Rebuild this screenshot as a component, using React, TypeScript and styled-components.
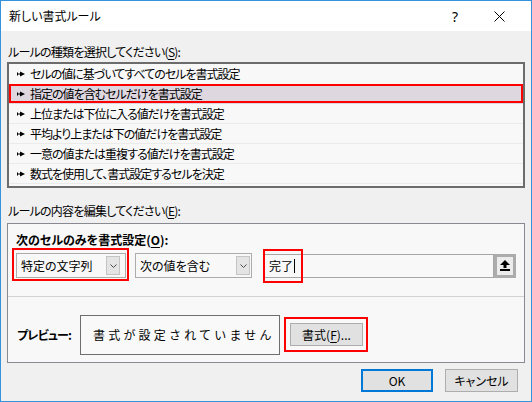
import React from "react";
import styled, { createGlobalStyle } from "styled-components";

const Global = createGlobalStyle`
  html, body { margin: 0; padding: 0; background: #f0f0f0; }
  body { font-family: "Noto Sans CJK JP", "Noto Sans", sans-serif; }
`;

const Window = styled.div`
  width: 532px;
  height: 402px;
  box-sizing: border-box;
  border: 1px solid #3592dd;
  background: #f0f0f0;
  display: flex;
  flex-direction: column;
  font-family: "Noto Sans CJK JP", "Noto Sans", sans-serif;
  font-size: 12px;
  color: #000;
  font-feature-settings: "palt";
`;

const TitleBar = styled.div`
  height: 30px;
  background: #ffffff;
  display: flex;
  align-items: center;
  padding-left: 8px;
`;

const Title = styled.div`
  flex: 1;
  font-size: 12px;
  line-height: 16px;
`;

const TitleButton = styled.div`
  width: 44px;
  height: 30px;
  display: flex;
  align-items: center;
  justify-content: center;
  font-family: "Noto Sans", sans-serif;
  font-size: 14px;
`;

const CloseButton = styled(TitleButton)`
  margin-right: 10px;
`;

const Body = styled.div`
  flex: 1;
  display: flex;
  flex-direction: column;
  padding: 0 6px;
`;

const Label = styled.div<{ $top: number }>`
  margin-top: ${(p) => p.$top}px;
  padding-left: 1px;
  line-height: 16px;
  height: 16px;
  letter-spacing: -0.75px;
`;

const Key = styled.span`
  text-decoration: underline;
  text-underline-offset: 2px;
`;

const RuleList = styled.div`
  margin-top: 2px;
  height: 126px;
  box-sizing: border-box;
  border: 2px solid #6c6c6c;
  background: #f8f8f8;
  display: flex;
  flex-direction: column;
`;

const RuleRow = styled.div<{ $selected?: boolean; $line?: boolean }>`
  height: 20px;
  box-sizing: border-box;
  display: flex;
  align-items: center;
  gap: 5px;
  padding-left: 8px;
  border-bottom: 1px solid ${(p) => (p.$line ? "#ebebeb" : "transparent")};
  background: ${(p) => (p.$selected ? "#dfd7e0" : "transparent")};
  box-shadow: ${(p) => (p.$selected ? "inset 0 0 0 2px #ff0000" : "none")};
  line-height: 16px;
  letter-spacing: -1px;
`;

const Bullet = () => (
  <svg width="8" height="6" viewBox="0 0 8 6">
    <rect x="0" y="2.5" width="4" height="1" fill="#000" />
    <rect x="0" y="1.5" width="1" height="3" fill="#000" />
    <polygon points="3,0.5 8,3 3,5.5" fill="#000" />
  </svg>
);

const Group = styled.div`
  margin-top: 4px;
  height: 140px;
  box-sizing: border-box;
  border: 1px solid #898991;
  background: #f8f8f8;
  display: flex;
  flex-direction: column;
`;

const UpperSection = styled.div`
  height: 73px;
  box-sizing: border-box;
  padding: 8px 0 0 8px;
  border-bottom: 1px solid #d2d2d2;
`;

const BoldLabel = styled.div`
  font-weight: 700;
  line-height: 16px;
  height: 16px;
`;

const ControlRow = styled.div`
  margin-top: 5px;
  display: flex;
  align-items: center;
`;

const Anchor = styled.div<{ $gap?: number; $lead?: number }>`
  position: relative;
  margin-left: ${(p) => p.$lead ?? 0}px;
  margin-right: ${(p) => p.$gap ?? 0}px;
  display: flex;
`;

/* red annotation frame drawn over a control */
const Highlight = styled.div<{ $l: number; $t: number; $r: number; $b: number }>`
  position: absolute;
  left: ${(p) => p.$l}px;
  top: ${(p) => p.$t}px;
  right: ${(p) => p.$r}px;
  bottom: ${(p) => p.$b}px;
  border: 2px solid #ff0000;
  pointer-events: none;
`;

const Combo = styled.div<{ $w: number; $inset: number }>`
  width: ${(p) => p.$w}px;
  height: 25px;
  box-sizing: border-box;
  border: 1px solid #acacac;
  background: #f8f8f8;
  display: flex;
  align-items: center;
  padding: 0 ${(p) => p.$inset}px 0 4px;
`;

const ComboText = styled.div`
  flex: 1;
  line-height: 16px;
`;

const DropButton = styled.div`
  width: 14px;
  height: 19px;
  box-sizing: border-box;
  border: 1px solid #c4c4c4;
  background: #e4e4e4;
  display: flex;
  align-items: center;
  justify-content: center;
`;

const Chevron = () => (
  <svg width="7" height="4" viewBox="0 0 7 4">
    <polyline points="0.5,0.5 3.5,3.5 6.5,0.5" fill="none" stroke="#4a4a4a" strokeWidth="1" />
  </svg>
);

const TextInput = styled.div`
  width: 230px;
  height: 24px;
  box-sizing: border-box;
  border: 1px solid #a6a6a6;
  background: #f8f8f8;
  display: flex;
  align-items: center;
  padding-left: 4px;
  line-height: 16px;
`;

const Caret = styled.span`
  display: inline-block;
  width: 1px;
  height: 14px;
  background: #000;
  margin-left: 1px;
`;

const PickButton = styled.div`
  width: 22px;
  height: 24px;
  box-sizing: border-box;
  border: 3px solid #acacac;
  background: #ececec;
  display: flex;
  align-items: center;
  justify-content: center;
`;

const UpArrow = () => (
  <svg width="10" height="11" viewBox="0 0 10 11">
    <polygon points="5,0 10,5 6.5,5 6.5,8 3.5,8 3.5,5 0,5" fill="#000" />
    <rect x="0" y="9" width="10" height="2" fill="#000" />
  </svg>
);

const LowerSection = styled.div`
  flex: 1;
  display: flex;
  align-items: center;
  padding: 10px 0 0 9px;
`;

const PreviewLabel = styled(BoldLabel)`
  width: 63px;
  letter-spacing: -0.8px;
`;

const PreviewBox = styled.div`
  width: 200px;
  height: 40px;
  box-sizing: border-box;
  border: 1px solid #6e6e6e;
  background: #f9f9f9;
  display: flex;
  align-items: center;
  padding-left: 12px;
  font-size: 12px;
  letter-spacing: 3.2px;
  font-feature-settings: normal;
`;

const Button = styled.div<{ $w: number; $default?: boolean }>`
  width: ${(p) => p.$w}px;
  height: 23px;
  box-sizing: border-box;
  border: ${(p) => (p.$default ? "2px solid #0078d7" : "1px solid #adadad")};
  background: #e1e1e1;
  display: flex;
  align-items: center;
  justify-content: center;
  line-height: 16px;
`;

const Footer = styled.div`
  margin-top: 6px;
  display: flex;
  justify-content: flex-end;
  gap: 12px;
  padding-right: 7px;
`;

const rules = [
  "セルの値に基づいてすべてのセルを書式設定",
  "指定の値を含むセルだけを書式設定",
  "上位または下位に入る値だけを書式設定",
  "平均より上または下の値だけを書式設定",
  "一意の値または重複する値だけを書式設定",
  "数式を使用して、書式設定するセルを決定",
];

export default function App() {
  return (
    <>
      <Global />
      <Window>
        <TitleBar>
          <Title>新しい書式ルール</Title>
          <TitleButton>?</TitleButton>
          <CloseButton>
            <svg width="11" height="11" viewBox="0 0 11 11">
              <path d="M0.5 0.5 L10.5 10.5 M10.5 0.5 L0.5 10.5" stroke="#000" strokeWidth="1" />
            </svg>
          </CloseButton>
        </TitleBar>
        <Body>
          <Label $top={13}>
            ルールの種類を選択してください(<Key>S</Key>):
          </Label>
          <RuleList>
            {rules.map((r, i) => (
              <RuleRow key={r} $selected={i === 1} $line={i >= 2}>
                <Bullet />
                <span>{r}</span>
              </RuleRow>
            ))}
          </RuleList>
          <Label $top={15}>
            ルールの内容を編集してください(<Key>E</Key>):
          </Label>
          <Group>
            <UpperSection>
              <BoldLabel>
                次のセルのみを書式設定(<Key>O</Key>):
              </BoldLabel>
              <ControlRow>
                <Anchor $gap={9}>
                  <Combo $w={110} $inset={5}>
                    <ComboText>特定の文字列</ComboText>
                    <DropButton>
                      <Chevron />
                    </DropButton>
                  </Combo>
                  <Highlight $l={-4} $t={-5} $r={-3} $b={-3} />
                </Anchor>
                <Anchor $gap={12}>
                  <Combo $w={117} $inset={1}>
                    <ComboText>次の値を含む</ComboText>
                    <DropButton>
                      <Chevron />
                    </DropButton>
                  </Combo>
                </Anchor>
                <Anchor>
                  <TextInput>
                    完了
                    <Caret />
                  </TextInput>
                  <Highlight $l={-1} $t={-5} $r={191} $b={-5} />
                </Anchor>
                <PickButton>
                  <UpArrow />
                </PickButton>
              </ControlRow>
            </UpperSection>
            <LowerSection>
              <PreviewLabel>プレビュー:</PreviewLabel>
              <PreviewBox>書式が設定されていません</PreviewBox>
              <Anchor $lead={10}>
                <Button $w={73}>
                  書式(<Key>F</Key>)...
                </Button>
                <Highlight $l={-6} $t={-6} $r={-5} $b={-6} />
              </Anchor>
            </LowerSection>
          </Group>
          <Footer>
            <Button $w={72} $default>
              OK
            </Button>
            <Button $w={73}>キャンセル</Button>
          </Footer>
        </Body>
      </Window>
    </>
  );
}
